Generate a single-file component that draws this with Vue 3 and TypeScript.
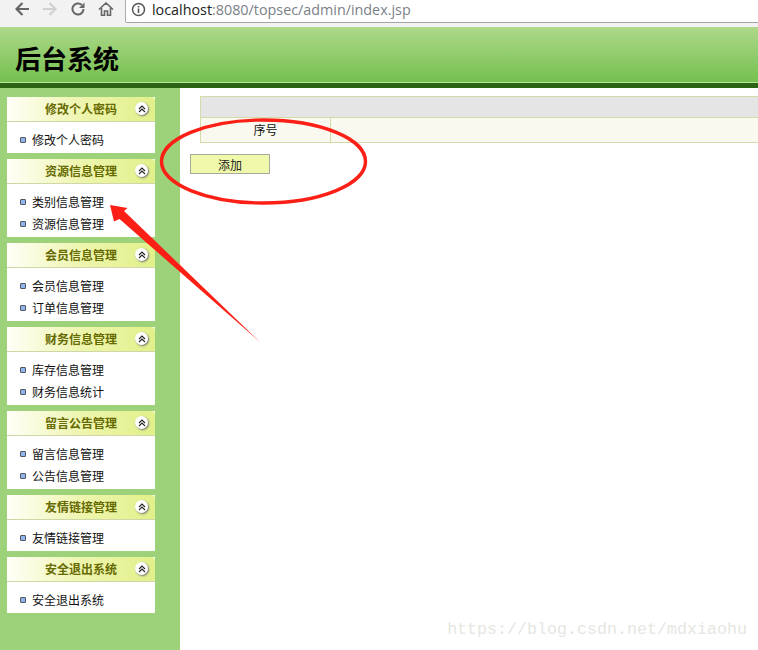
<script setup lang="ts">
interface Panel { title: string; items: string[] }
const panels: Panel[] = [
  { title: '修改个人密码', items: ['修改个人密码'] },
  { title: '资源信息管理', items: ['类别信息管理', '资源信息管理'] },
  { title: '会员信息管理', items: ['会员信息管理', '订单信息管理'] },
  { title: '财务信息管理', items: ['库存信息管理', '财务信息统计'] },
  { title: '留言公告管理', items: ['留言信息管理', '公告信息管理'] },
  { title: '友情链接管理', items: ['友情链接管理'] },
  { title: '安全退出系统', items: ['安全退出系统'] },
]
</script>

<template>
  <div class="page">
    <div class="browser">
      <svg class="back" width="14" height="14" viewBox="0 0 14 14"><path d="M14 7H2M7.500 1 1.500 7l6 6" fill="none" stroke="#666" stroke-width="2.200"/></svg>
      <svg class="forward" width="14" height="14" viewBox="0 0 14 14"><path d="M0 7H12M6.500 1l6 6-6 6" fill="none" stroke="#d0d0d0" stroke-width="2.200"/></svg>
      <svg class="reload" width="14" height="14" viewBox="0 0 14 14"><path d="M12.500 7A5.500 5.500 0 1 1 10.800 3" fill="none" stroke="#666" stroke-width="2"/><path d="M13.500 .5V6H8z" fill="#666"/></svg>
      <svg class="home" width="16" height="14" viewBox="0 0 16 14"><path d="M1 7.500 8 1l7 6.500M3.500 6v7.200h3V9h3v4.200h3V6" fill="none" stroke="#666" stroke-width="1.600"/></svg>
      <div class="address">
        <svg width="15" height="15" viewBox="0 0 15 15"><circle cx="7.500" cy="7.500" r="6" fill="none" stroke="#555" stroke-width="1.500"/><path d="M7.500 6.500v4.500M7.500 4v1.500" stroke="#555" stroke-width="1.600"/></svg>
        <span class="url"><span class="host">localhost</span>:8080/topsec/admin/index.jsp</span>
      </div>
    </div>
    <header class="banner"><h1>后台系统</h1></header>
    <div class="main">
      <aside class="sidebar">
        <section v-for="panel in panels" :key="panel.title" class="panel">
          <div class="panel-head">
            <span class="panel-title">{{ panel.title }}</span>
            <span class="toggle">
              <svg width="8" height="8" viewBox="0 0 8 8"><path d="M1 4 4 1l3 3M1 7l3-3 3 3" fill="none" stroke="#222" stroke-width="1.100"/></svg>
            </span>
          </div>
          <ul class="panel-body">
            <li v-for="item in panel.items" :key="item"><i class="bullet"></i>{{ item }}</li>
          </ul>
        </section>
      </aside>
      <main class="content">
        <div class="table">
          <div class="row-head"></div>
          <div class="row">
            <div class="cell-first">序号</div>
            <div class="cell-rest"></div>
          </div>
        </div>
        <button class="add" type="button">添加</button>
      </main>
    </div>
    <svg class="annotation" width="758" height="650" viewBox="0 0 758 650">
      <ellipse cx="263.500" cy="161.500" rx="102" ry="41.500" fill="none" stroke="#fb1f16" stroke-width="3.400"/>
      <path d="M110 205 127.500 208 124 211 261 343 119.500 219 114 221.500z" fill="#fb1f16"/>
    </svg>
    <div class="watermark">https://blog.csdn.net/mdxiaohu</div>
  </div>
</template>

<style>
html, body { margin: 0; background: #fff; overflow: hidden; }
</style>

<style scoped>
.page {
  position: relative;
  width: 758px;
  height: 650px;
  overflow: hidden;
  font-family: "Liberation Sans", "Noto Sans CJK SC", sans-serif;
  background: #fff;
}
.browser {
  height: 27px;
  background: #f2f2f2;
  display: flex;
  align-items: flex-start;
  padding: 2px 0 0 15px;
  box-sizing: border-box;
}
.browser > svg { flex: none; }
.forward { margin-left: 14px; }
.reload { margin-left: 14px; }
.home { margin-left: 13px; }
.address {
  margin: -2px 0 0 11px;
  flex: 1;
  height: 23px;
  background: #fff;
  border-left: 1px solid #aaa;
  border-bottom: 1px solid #a5a5a5;
  border-bottom-left-radius: 2px;
  display: flex;
  align-items: flex-start;
  gap: 6px;
  padding: 2px 0 0 5px;
  box-sizing: border-box;
}
.url {
  font-family: "Open Sans", sans-serif;
  font-size: 14.330px;
  line-height: 15px;
  color: #7a7f88;
}
.host { color: #222; }
.banner {
  height: 61px;
  box-sizing: border-box;
  background: linear-gradient(#aed88a, #74c04e);
  border-bottom: 5px solid #2a6414;
  box-shadow: inset 0 -1px 0 #b9e59a;
  display: flex;
  align-items: center;
  padding: 9px 0 0 15px;
}
.banner h1 {
  margin: 0;
  font-size: 26px;
  line-height: 32px;
  font-weight: 700;
  color: #000;
}
.main { display: flex; height: 562px; }
.sidebar {
  width: 180px;
  flex: none;
  background: #9dd27a;
  box-sizing: border-box;
  padding: 9px 25px 0 7px;
  display: flex;
  flex-direction: column;
  gap: 6px;
}
.panel { background: #fff; }
.panel-head {
  position: relative;
  height: 25px;
  box-sizing: border-box;
  border-bottom: 1px solid #cfd7a6;
  border-radius: 4px 4px 0 0;
  background: linear-gradient(90deg, #fffff8 0%, #eef5ae 50%, #e2f08a 100%);
  display: flex;
  align-items: center;
  justify-content: center;
  padding-bottom: 2px;
}
.panel-title {
  font-size: 12px;
  font-weight: 700;
  color: #666a00;
}
.toggle {
  position: absolute;
  right: 7px;
  top: 5px;
  width: 13px;
  height: 13px;
  border-radius: 50%;
  background: #fff;
  box-shadow: 1px 1px 2px #777;
  display: flex;
  align-items: center;
  justify-content: center;
}
.panel-body {
  list-style: none;
  margin: 0;
  padding: 8px 0 1px 0;
}
.panel-body li {
  height: 22px;
  line-height: 22px;
  font-size: 12px;
  color: #111;
  display: flex;
  align-items: center;
  padding-left: 13px;
}
.bullet {
  width: 4px;
  height: 4px;
  border: 1px solid #556;
  border-radius: 1px;
  background: #8fb4ec;
  margin: -2px 6px 0 0;
}
.content { flex: 1; min-width: 0; padding-top: 8px; }
.table {
  margin-left: 20px;
  height: 47px;
  box-sizing: border-box;
  border: 1px solid #d3dba8;
  border-right: 0;
  display: flex;
  flex-direction: column;
}
.row-head { height: 23px; box-sizing: border-box; background: #e5e5e5; border-bottom: 1px solid #d3dba8; }
.row { flex: 1; display: flex; background: #f9f9f0; }
.cell-first {
  width: 130px;
  box-sizing: border-box;
  border-right: 1px solid #d3dba8;
  text-align: center;
  font-size: 12px;
  line-height: 22px;
  color: #111;
  padding-top: 2px;
}
.cell-rest { flex: 1; }
.add {
  display: block;
  margin: 11px 0 0 10px;
  width: 80px;
  height: 20px;
  padding: 0;
  background: #f0f8aa;
  border: 1px solid #a8a8a0;
  font: 12px "Liberation Sans", "Noto Sans CJK SC", sans-serif;
  color: #222;
}
.annotation { position: absolute; left: 0; top: 0; pointer-events: none; }
.watermark {
  position: absolute;
  right: 11px;
  bottom: 11px;
  font-family: "Liberation Mono", monospace;
  font-size: 16.670px;
  color: #e6e6e2;
}
</style>
